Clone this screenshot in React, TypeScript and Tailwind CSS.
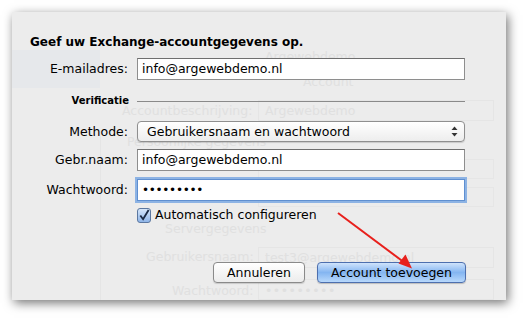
import * as React from "react";

const font = { fontFamily: '"DejaVu Sans", "Lucida Grande", sans-serif' };

function Ghost() {
  // faded window content that shows through the translucent sheet
  return (
    <div className="pointer-events-none absolute inset-0 text-[12.5px] text-[#e0e0e0]">
      <div className="absolute left-0 top-[38px] h-[38px] w-[88px] bg-[#e6e8eb]" />
      <div className="absolute left-[88px] top-[118px] h-[170px] w-px bg-[#e5e5e5]" />
      <div className="absolute left-[253px] top-[36px]">Argewebdemo</div>
      <div className="absolute left-[291px] top-[61px]">Account</div>
      <div className="absolute left-[110px] top-[90px]">Accountbeschrijving:</div>
      <div className="absolute left-[246px] top-[88px] h-[21px] w-[236px] border border-[#e5e5e5]" />
      <div className="absolute left-[253px] top-[90px]">Argewebdemo</div>
      <div className="absolute left-[115px] top-[121px]">Persoonlijke gegevens</div>
      <div className="absolute left-[246px] top-[147px] h-[20px] w-[236px] border border-[#e6e6e6]" />
      <div className="absolute left-[246px] top-[175px] h-[20px] w-[236px] border border-[#e6e6e6]" />
      <div className="absolute left-[153px] top-[208px]">Servergegevens</div>
      <div className="absolute left-[134px] top-[236px]">Gebruikersnaam:</div>
      <div className="absolute left-[246px] top-[235px] h-[21px] w-[236px] border border-[#e5e5e5]" />
      <div className="absolute left-[253px] top-[237px]">test3@argewebdemo.nl</div>
      <div className="absolute left-[160px] top-[270px]">Wachtwoord:</div>
      <div className="absolute left-[246px] top-[267px] h-[21px] w-[236px] border border-[#e5e5e5]" />
      <div className="absolute left-[253px] top-[270px] tracking-[0.5px]">•••••••••</div>
    </div>
  );
}

function Label({ children }: { children: React.ReactNode }) {
  return <div className="w-[117px] shrink-0 pr-[1px] text-right">{children}</div>;
}

export default function App() {
  return (
    <div className="relative h-[321px] w-[526px] overflow-hidden bg-white" style={font}>
      <div className="relative ml-[12px] mt-[12px] h-[288px] w-[494px] bg-[#ececec] shadow-[2px_3px_10px_rgba(0,0,0,0.55)]">
        <Ghost />
        <div className="relative flex flex-col text-[12.5px] leading-[16px] text-black">
          <div className="ml-[18px] mt-[22px] text-[12px] font-bold">Geef uw Exchange-accountgegevens op.</div>

          <div className="mt-[8px] flex items-center gap-[8px]">
            <Label>E-mailadres:</Label>
            <div className="flex h-[22px] w-[328px] items-center border border-[#8e8e8e] border-t-[#6f6f6f] bg-white px-[4px]">
              info@argewebdemo.nl
            </div>
          </div>

          <div className="mt-[13px] flex items-center gap-[8px]">
            <div className="w-[117px] shrink-0 text-right text-[10px] font-bold">Verificatie</div>
            <div className="h-px w-[328px] bg-[#8a8a8a]" />
          </div>

          <div className="mt-[12px] flex items-center gap-[8px]">
            <Label>Methode:</Label>
            <div className="flex h-[21px] w-[328px] items-center justify-between rounded-[4px] border border-[#8f8f8f] bg-gradient-to-b from-white to-[#ededed] pl-[9px] pr-[6px] shadow-[0_1px_1px_rgba(0,0,0,0.15)]">
              <span>Gebruikersnaam en wachtwoord</span>
              <svg width="7" height="11" viewBox="0 0 7 11">
                <path d="M3.5 0.5 L6.5 4 L0.5 4 Z" fill="#333" />
                <path d="M3.5 10.5 L6.5 7 L0.5 7 Z" fill="#333" />
              </svg>
            </div>
          </div>

          <div className="mt-[7px] flex items-center gap-[8px]">
            <Label>Gebr.naam:</Label>
            <div className="flex h-[22px] w-[328px] items-center border border-[#8e8e8e] border-t-[#6f6f6f] bg-white px-[4px]">
              info@argewebdemo.nl
            </div>
          </div>

          <div className="mt-[8px] flex items-center gap-[8px]">
            <Label>Wachtwoord:</Label>
            <div className="flex h-[22px] w-[328px] items-center border border-[#5f8fd0] bg-white px-[4px] text-[12px] tracking-[-0.3px] shadow-[0_0_0_2px_rgba(110,160,225,0.75)]">
              •••••••••
            </div>
          </div>

          <div className="mt-[6px] flex items-center gap-[4px] pl-[125px]">
            <div className="flex h-[15px] w-[14px] items-center justify-center rounded-[3px] border border-[#5b77a0] bg-gradient-to-b from-[#d6e6fa] to-[#8fb5e8]">
              <svg width="13" height="13" viewBox="0 0 13 13">
                <path d="M2.5 6.5 L5.5 10.5 L11.5 0.5" fill="none" stroke="#1b2a44" strokeWidth="2" />
              </svg>
            </div>
            <span>Automatisch configureren</span>
          </div>

          <div className="mt-[39px] flex items-center gap-[12px] pl-[201px]">
            <div className="flex h-[21px] w-[92px] items-center justify-center rounded-[4px] border border-[#8a8a8a] bg-gradient-to-b from-white to-[#ececec] shadow-[0_1px_1px_rgba(0,0,0,0.15)]">
              Annuleren
            </div>
            <div className="flex h-[21px] w-[149px] items-center justify-center rounded-[4px] border border-[#4d6fae] bg-gradient-to-b from-[#cfe3fb] via-[#84b5f1] to-[#b8d8fb] shadow-[0_1px_1px_rgba(0,0,0,0.2)]">
              Account toevoegen
            </div>
          </div>
        </div>
      </div>
      <svg className="pointer-events-none absolute left-0 top-0" width="526" height="321">
        <line x1="338" y1="213" x2="405" y2="263" stroke="#e8201c" strokeWidth="2" />
        <path d="M412 268.5 L398.5 263.5 L405.5 254.5 Z" fill="#e8201c" />
      </svg>
    </div>
  );
}
